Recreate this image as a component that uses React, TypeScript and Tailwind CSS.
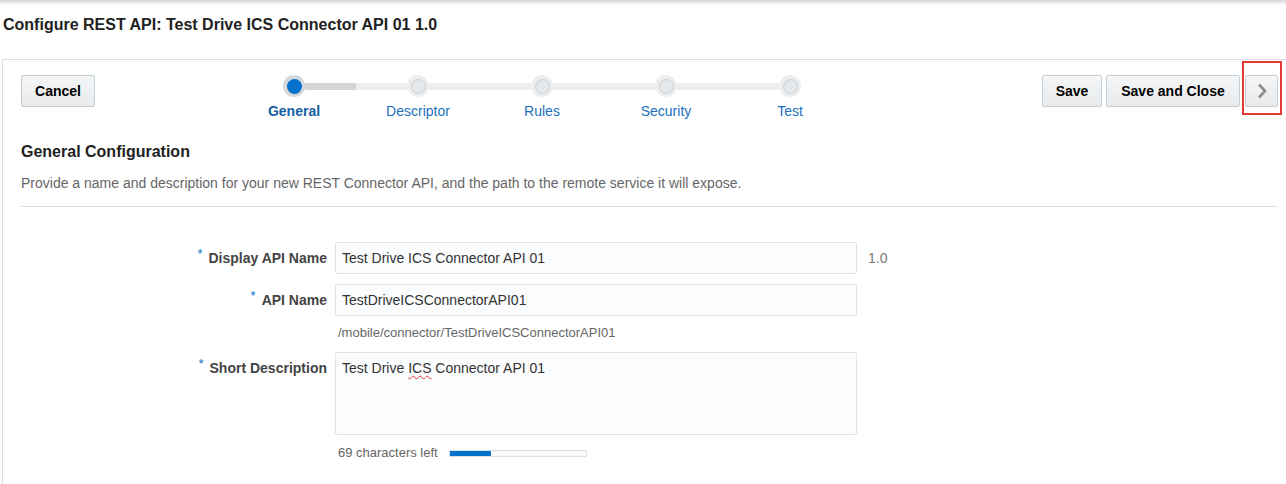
const steps = ["General", "Descriptor", "Rules", "Security", "Test"];

function Btn({ children, className = "" }: { children: React.ReactNode; className?: string }) {
  return (
    <button
      className={
        "h-[32px] rounded-[2px] border border-[#c4ced7] bg-gradient-to-b from-[#f5f6f7] to-[#e8eaec] text-[14px] font-bold text-[#000] " +
        className
      }
    >
      {children}
    </button>
  );
}

function Stepper() {
  return (
    <div className="ml-[137px] flex">
      {steps.map((s, i) => (
        <div key={s} className="flex w-[124px] flex-col items-center">
          <div className="flex items-center">
            <div className={"h-[7px] w-[51px] " + (i === 0 ? "bg-transparent" : "bg-[#eeeeee]")} />
            {i === 0 ? (
              <div className="flex h-[22px] w-[22px] items-center justify-center rounded-full bg-[#d6d7d9]">
                <div className="h-[15px] w-[15px] rounded-full bg-[#0572ce]" />
              </div>
            ) : (
              <div className="flex h-[22px] w-[22px] items-center justify-center rounded-full bg-[#eeeeee]">
                <div className="h-[15px] w-[15px] rounded-full border border-[#c9ced3] bg-[#e4e8eb]" />
              </div>
            )}
            <div
              className={
                "h-[7px] w-[51px] " +
                (i === 4 ? "bg-transparent" : i === 0 ? "bg-[#d3d5d7]" : "bg-[#eeeeee]")
              }
            />
          </div>
          <div
            className={
              "mt-[6px] text-[14px] leading-[16px] " +
              (i === 0 ? "font-bold text-[#145ea8]" : "text-[#1c6fc0]")
            }
          >
            {s}
          </div>
        </div>
      ))}
    </div>
  );
}

function Label({ text, className = "" }: { text: string; className?: string }) {
  return (
    <div className={"w-[306px] shrink-0 text-right text-[14px] font-bold leading-[16px] text-[#444] " + className}>
      <span className="relative -top-[5px] mr-[6px] text-[13px] font-normal text-[#0572ce]">*</span>
      {text}
    </div>
  );
}

export default function App() {
  return (
    <div className="h-[484px] w-[1286px] overflow-hidden bg-white font-['Liberation_Sans',Arial,sans-serif]">
      <div className="h-[5px] bg-gradient-to-b from-[#d4d4d4] to-white" />
      <h1 className="mt-[10px] pl-[3px] text-[16px] font-bold leading-[20px] text-[#222]">
        Configure REST API: Test Drive ICS Connector API 01 1.0
      </h1>

      <div className="ml-[2px] mt-[24px] w-[1284px] border-l border-t border-[#d6dfe6] pb-[40px]">
        {/* header: cancel, train, save buttons */}
        <div className="flex items-start pl-[18px] pr-[8px] pt-[15px]">
          <Btn className="w-[74px]">Cancel</Btn>
          <Stepper />
          <div className="ml-auto flex">
            <Btn className="w-[60px]">Save</Btn>
            <Btn className="ml-[4px] w-[134px]">Save and Close</Btn>
            <div className="relative ml-[5px]">
              <Btn className="flex w-[33px] items-center justify-center">
                <svg width="10" height="16" viewBox="0 0 10 16" className="ml-[1px]">
                  <polyline points="2,1.5 8,8 2,14.5" fill="none" stroke="#8c8c8c" strokeWidth="2.6" />
                </svg>
              </Btn>
              <div className="pointer-events-none absolute -left-[3px] -top-[14px] h-[54px] w-[40px] border-2 border-[#e53935]" />
            </div>
          </div>
        </div>

        <div className="pl-[18px] pr-[9px]">
          <h2 className="mt-[23px] text-[16px] font-bold leading-[20px] text-[#222]">General Configuration</h2>
          <p className="mt-[11px] text-[14px] leading-[20px] text-[#666]">
            Provide a name and description for your new REST Connector API, and the path to the remote service it will
            expose.
          </p>
          <div className="mt-[13px] h-px bg-[#d6dfe6]" />

          <div className="mt-[35px] flex flex-col">
            <div className="flex items-center">
              <Label text="Display API Name" />
              <div className="ml-[8px] flex h-[32px] w-[522px] items-center rounded-[2px] border border-[#dfe4e7] bg-[#fbfcfd] pl-[6px] text-[14px] text-[#333]">
                Test Drive ICS Connector API 01
              </div>
              <span className="ml-[11px] text-[14px] text-[#777]">1.0</span>
            </div>

            <div className="mt-[10px] flex items-center">
              <Label text="API Name" />
              <div className="ml-[8px] flex h-[32px] w-[522px] items-center rounded-[2px] border border-[#dfe4e7] bg-[#fbfcfd] pl-[6px] text-[14px] text-[#333]">
                TestDriveICSConnectorAPI01
              </div>
            </div>
            <div className="ml-[317px] mt-[10px] text-[13px] leading-[14px] text-[#666]">
              /mobile/connector/TestDriveICSConnectorAPI01
            </div>

            <div className="mt-[12px] flex items-start">
              <Label text="Short Description" className="pt-[8px]" />
              <div className="ml-[8px] h-[83px] w-[522px] rounded-[2px] border border-[#dfe4e7] bg-[#fbfcfd] pl-[6px] pt-[7px] text-[14px] leading-[16px] text-[#333]">
                Test Drive{" "}
                <span className="underline decoration-[#e53935] decoration-wavy decoration-1 underline-offset-2">
                  ICS
                </span>{" "}
                Connector API 01
              </div>
            </div>
            <div className="ml-[317px] mt-[11px] flex items-center">
              <span className="text-[13px] leading-[14px] text-[#666]">69 characters left</span>
              <div className="ml-[11px] h-[7px] w-[138px] rounded-[1px] border border-[#d6dfe6] bg-[#fbfcfd]">
                <div className="h-full w-[41px] bg-[#0572ce]" />
              </div>
            </div>
          </div>
        </div>
      </div>
    </div>
  );
}
